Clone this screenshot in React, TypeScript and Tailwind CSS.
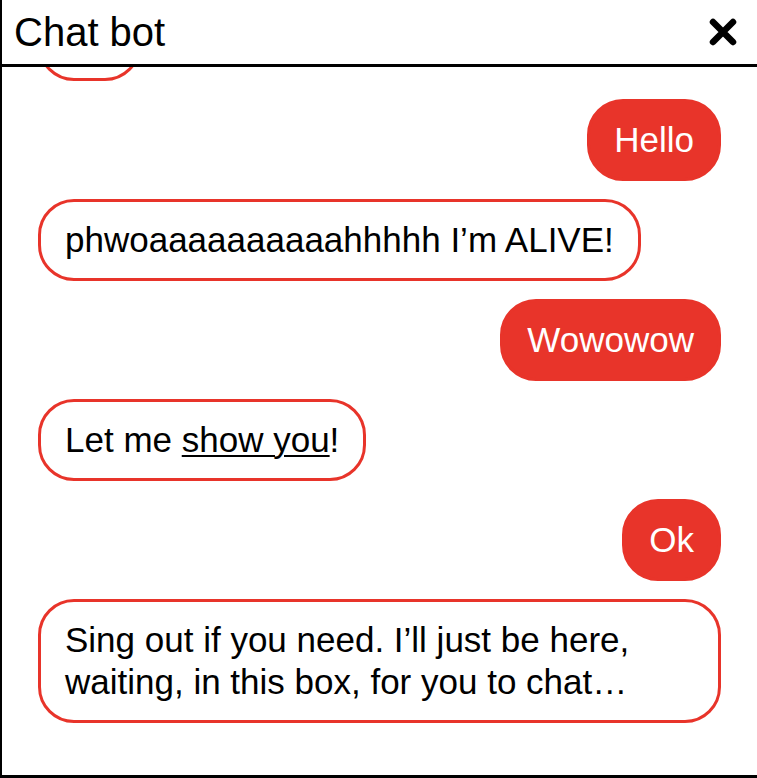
import React from 'react'

type Message = {
  id: number
  from: 'bot' | 'user'
  body: React.ReactNode
}

const messages: Message[] = [
  { id: 1, from: 'bot', body: 'Yo!' },
  { id: 2, from: 'user', body: 'Hello' },
  { id: 3, from: 'bot', body: 'phwoaaaaaaaaaahhhhh I\u2019m ALIVE!' },
  { id: 4, from: 'user', body: 'Wowowow' },
  {
    id: 5,
    from: 'bot',
    body: (
      <>
        Let me{' '}
        <a href="#" className="underline decoration-2 underline-offset-[3px]">
          show you
        </a>
        !
      </>
    ),
  },
  { id: 6, from: 'user', body: 'Ok' },
  {
    id: 7,
    from: 'bot',
    body: 'Sing out if you need. I\u2019ll just be here, waiting, in this box, for you to chat\u2026',
  },
]

function CloseIcon() {
  return (
    <svg width="28" height="28" viewBox="0 0 28 28" aria-hidden="true">
      <path d="M4 4 L24 24 M24 4 L4 24" stroke="#000" strokeWidth="6.5" strokeLinecap="round" fill="none" />
    </svg>
  )
}

function Bubble({ msg }: { msg: Message }) {
  const mine = msg.from === 'user'
  return (
    <div
      className={`max-w-full shrink-0 rounded-[36px] border-[3px] border-[#e8342a] px-6 py-[17px] text-[35px] leading-[42px] ${
        mine ? 'self-end bg-[#e8342a] text-white' : 'self-start bg-white text-black'
      }`}
    >
      {msg.body}
    </div>
  )
}

export default function App() {
  return (
    <div className="flex h-[778px] w-full flex-col overflow-hidden border-b-[3px] border-l-2 border-black bg-white font-['Liberation_Sans',Arial,Helvetica,sans-serif]">
      <header className="flex h-[67px] shrink-0 items-center justify-between border-b-[3px] border-black pl-3 pr-5">
        <h1 className="text-[40px] leading-[48px] text-black">Chat bot</h1>
        <button type="button" aria-label="Close" className="flex items-center justify-center">
          <CloseIcon />
        </button>
      </header>

      <div className="flex min-h-0 flex-1 flex-col justify-end gap-[18px] overflow-hidden px-9 pb-[52px]">
        {messages.map((m) => (
          <Bubble key={m.id} msg={m} />
        ))}
      </div>
    </div>
  )
}
